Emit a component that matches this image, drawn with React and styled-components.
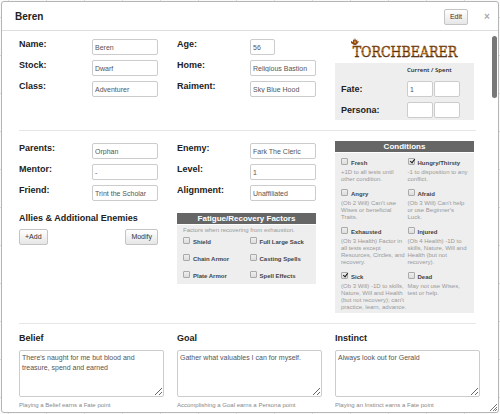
import React, { useId } from "react";
import styled, { createGlobalStyle, css } from "styled-components";

const GlobalStyle = createGlobalStyle`
  *, *::before, *::after { box-sizing: border-box; }
  body {
    margin: 0;
    font-family: "Liberation Sans", Arial, sans-serif;
    color: #222;
    background-color: #fafafa;
    background-image:
      linear-gradient(90deg, #ddd 1px, transparent 1px),
      linear-gradient(#ddd 1px, transparent 1px);
    background-size: 38px 38px;
    background-position: 8px 17px;
  }
`;

const Page = styled.div`
  padding: 1px 1px 2px;
`;

const Dialog = styled.section`
  position: relative;
  background: #fff;
  border: 1px solid #b5b5b5;
  border-radius: 3px;
`;

const Header = styled.header`
  display: flex;
  align-items: center;
  height: 29px;
  padding: 2px 6px 0 13px;
  border-bottom: 1px solid #ddd;
`;

const Title = styled.h1`
  flex: 1;
  margin: 0;
  font-size: 10px;
  line-height: 12px;
`;

const Button = styled.button`
  height: 16px;
  padding: 0 5px;
  border: 1px solid #c4c4c4;
  border-radius: 2px;
  background: linear-gradient(#fff, #e6e6e6);
  font: 7px/12px "Liberation Sans", Arial, sans-serif;
  color: #333;
`;

const CloseButton = styled.button`
  width: 10px;
  margin-left: 14px;
  padding: 0;
  border: 0;
  background: none;
  font: bold 10px/12px "Liberation Sans", Arial, sans-serif;
  color: #aaa;
`;

const Body = styled.div`
  padding: 6px 18px 3px 17px;
`;

const Columns = styled.div`
  display: grid;
  grid-template-columns: repeat(3, 1fr);
  column-gap: 13px;
`;

const Column = styled.div`
  padding-right: 6px;
`;

const Divider = styled.hr`
  height: 1px;
  margin: ${(p) => p.$margin};
  border: 0;
  background: #e6e6e6;
`;

const FieldRow = styled.div`
  display: grid;
  grid-template-columns: 73px 1fr;
  height: 21px;
  padding-top: 2px;
`;

const Label = styled.label`
  font-size: 9px;
  font-weight: bold;
  line-height: 11px;
`;

const control = css`
  border: 1px solid #ccc;
  border-radius: 2px;
  background: #fff;
  font-family: "Liberation Sans", Arial, sans-serif;
  font-size: 7px;
  color: #555;
`;

const TextInput = styled.input`
  ${control}
  width: ${(p) => (p.$short ? "25px" : "100%")};
  min-width: 0;
  height: 16px;
  padding: 0 2px;
`;

const Logo = styled.svg`
  display: block;
  width: 114px;
  height: 23px;
  margin: 0 auto 3px;
`;

const FatePanel = styled.div`
  display: grid;
  grid-template-columns: 1fr 26px 26px;
  align-items: center;
  column-gap: 1px;
  row-gap: 5px;
  padding: 2px 14px 2px 6px;
  background: #eee;
`;

const FateHead = styled.div`
  grid-column: 2 / 4;
  font-family: "Open Sans", sans-serif;
  font-size: 6px;
  font-weight: 600;
  line-height: 11px;
`;

const Panel = styled.section`
  margin-top: ${(p) => p.$top || "0"};
  background: #eee;
  color: #999;
  font-size: 6px;
  line-height: 7px;
`;

const PanelTitle = styled.h2`
  margin: 0;
  border-bottom: 1px solid #fff;
  background: #666;
  background-clip: padding-box;
  color: #fff;
  font-size: 8px;
  line-height: 11px;
  text-align: center;
`;

const PanelNote = styled.p`
  margin: 0;
  padding: 2px 6px 0;
`;

const CheckGrid = styled.div`
  display: grid;
  grid-template-columns: 1fr 1fr;
  row-gap: 6px;
  padding: ${(p) => p.$padding};
`;

const CheckLabel = styled.label`
  display: flex;
  gap: 3px;
  height: 11px;
  font-weight: bold;
  line-height: 11px;
  color: #444;
`;

const Checkbox = styled.input`
  position: relative;
  appearance: none;
  flex: none;
  width: 7px;
  height: 7px;
  margin: 0;
  border: 1px solid #aaa;
  border-radius: 1px;
  background: linear-gradient(#eee, #ddd);

  &:checked::after {
    content: "";
    position: absolute;
    top: -1px;
    left: 2px;
    width: 3px;
    height: 5px;
    border: solid #222;
    border-width: 0 1px 1px 0;
    transform: rotate(38deg);
  }
`;

const Description = styled.p`
  margin: 0;
  white-space: pre;
`;

const Heading = styled.h2`
  margin: 8px 0 5px;
  font-size: 9px;
  line-height: 12px;
`;

const ButtonRow = styled.div`
  display: flex;
  justify-content: space-between;
`;

const TextLabel = styled(Label)`
  display: block;
  margin-bottom: 6px;
`;

const TextArea = styled.textarea`
  ${control}
  display: block;
  width: 100%;
  height: 47px;
  padding: 2px;
  line-height: 10px;
  overflow: hidden;
`;

const Help = styled.p`
  margin: 4px 0 0;
  font-size: 6px;
  line-height: 8px;
  color: #888;
`;

const ScrollThumb = styled.div`
  position: absolute;
  top: 34px;
  right: 1px;
  width: 5px;
  height: 62px;
  border-radius: 3px;
  background: #777;
`;

const ResizeGrip = styled.svg`
  position: absolute;
  right: 1px;
  bottom: 1px;
  width: 7px;
  height: 7px;
`;

const LogoText = styled.text`
  font-family: "DejaVu Serif Condensed", "DejaVu Serif", serif;
  font-size: 14px;
  text-anchor: middle;
`;

function Field({ label, value, short }) {
  const id = useId();
  return (
    <FieldRow>
      <Label htmlFor={id}>{label}</Label>
      <TextInput id={id} defaultValue={value} $short={short} />
    </FieldRow>
  );
}

function Check({ label, checked, children }) {
  return (
    <div>
      <CheckLabel>
        <Checkbox type="checkbox" defaultChecked={checked} />
        {label}
      </CheckLabel>
      {children && <Description>{children}</Description>}
    </div>
  );
}

function Note({ label, value, help }) {
  const id = useId();
  return (
    <div>
      <TextLabel htmlFor={id}>{label}</TextLabel>
      <TextArea id={id} defaultValue={value} />
      <Help>{help}</Help>
    </div>
  );
}

function TorchbearerLogo() {
  return (
    <Logo viewBox="0 0 114 23" role="img" aria-label="Torchbearer">
      <defs>
        <linearGradient id="ember" gradientUnits="userSpaceOnUse" x1="0" y1="9" x2="0" y2="20">
          <stop offset="0" stopColor="#6a3c10" />
          <stop offset="0.4" stopColor="#b06a1c" />
          <stop offset="0.5" stopColor="#5a300c" />
          <stop offset="0.6" stopColor="#c07820" />
          <stop offset="1" stopColor="#4a280c" />
        </linearGradient>
      </defs>
      <LogoText x="57" y="20" fill="url(#ember)" stroke="url(#ember)" strokeWidth="0.5">
        TORCHBEARER
      </LogoText>
      <path d="M3 6 L3 4 L5 5 L5 2 L6 3.5 L7 1 L8 3.5 L9.5 2.5 L9 4.6 L11 4 L10 6 L8 8 L6 8Z" fill="#8c4816" />
      <path d="M6 5 L7 3.5 L8 5.5 L7 6.5Z" fill="#f0a33c" />
    </Logo>
  );
}

const conditions = [
  ["Fresh", false, "+1D to all tests until\nother condition."],
  ["Hungry/Thirsty", true, "-1 to disposition to any\nconflict."],
  ["Angry", false, "(Ob 2 Will) Can't use\nWises or beneficial\nTraits."],
  ["Afraid", false, "(Ob 3 Will) Can't help\nor use Beginner's\nLuck."],
  ["Exhausted", false, "(Ob 3 Health) Factor in\nall tests except\nResources, Circles, and\nrecovery."],
  ["Injured", false, "(Ob 4 Health) -1D to\nskills, Nature, Will and\nHealth (but not\nrecovery)."],
  ["Sick", true, "(Ob 3 Will) -1D to skills,\nNature, Will and Health\n(but not recovery); can't\npractice, learn, advance."],
  ["Dead", false, "May not use Wises,\ntest or help."],
];

const factors = ["Shield", "Full Large Sack", "Chain Armor", "Casting Spells", "Plate Armor", "Spell Effects"];

export default function App() {
  return (
    <>
      <GlobalStyle />
      <Page>
        <Dialog>
          <Header>
            <Title>Beren</Title>
            <Button>Edit</Button>
            <CloseButton aria-label="Close">×</CloseButton>
          </Header>
          <Body>
            <Columns>
              <Column>
                <Field label="Name:" value="Beren" />
                <Field label="Stock:" value="Dwarf" />
                <Field label="Class:" value="Adventurer" />
              </Column>
              <Column>
                <Field label="Age:" value="56" short />
                <Field label="Home:" value="Religious Bastion" />
                <Field label="Raiment:" value="Sky Blue Hood" />
              </Column>
              <Column>
                <TorchbearerLogo />
                <FatePanel>
                  <FateHead>Current / Spent</FateHead>
                  <Label htmlFor="fate">Fate:</Label>
                  <TextInput id="fate" defaultValue="1" />
                  <TextInput aria-label="Fate spent" />
                  <Label htmlFor="persona">Persona:</Label>
                  <TextInput id="persona" />
                  <TextInput aria-label="Persona spent" />
                </FatePanel>
              </Column>
            </Columns>
            <Divider $margin="10px 4px 10px 0" />
            <Columns>
              <Column>
                <Field label="Parents:" value="Orphan" />
                <Field label="Mentor:" value="-" />
                <Field label="Friend:" value="Trint the Scholar" />
                <Heading>Allies &amp; Additional Enemies</Heading>
                <ButtonRow>
                  <Button>+Add</Button>
                  <Button>Modify</Button>
                </ButtonRow>
              </Column>
              <Column>
                <Field label="Enemy:" value="Fark The Cleric" />
                <Field label="Level:" value="1" />
                <Field label="Alignment:" value="Unaffiliated" />
                <Panel $top="9px">
                  <PanelTitle>Fatigue/Recovery Factors</PanelTitle>
                  <PanelNote>Factors when recovering from exhaustion.</PanelNote>
                  <CheckGrid $padding="3px 0 2px 6px">
                    {factors.map((name) => (
                      <Check key={name} label={name} />
                    ))}
                  </CheckGrid>
                </Panel>
              </Column>
              <Column>
                <Panel>
                  <PanelTitle>Conditions</PanelTitle>
                  <CheckGrid $padding="5px 0 2px 6px">
                    {conditions.map(([name, on, text]) => (
                      <Check key={name} label={name} checked={on}>
                        {text}
                      </Check>
                    ))}
                  </CheckGrid>
                </Panel>
              </Column>
            </Columns>
            <Divider $margin="10px 4px 9px 0" />
            <Columns>
              <Note
                label="Belief"
                value="There's naught for me but blood and treasure, spend and earned"
                help="Playing a Belief earns a Fate point"
              />
              <Note
                label="Goal"
                value="Gather what valuables I can for myself."
                help="Accomplishing a Goal earns a Persona point"
              />
              <Note
                label="Instinct"
                value="Always look out for Gerald"
                help="Playing an Instinct earns a Fate point"
              />
            </Columns>
          </Body>
          <ScrollThumb />
          <ResizeGrip viewBox="0 0 7 7" aria-hidden="true">
            <path d="M0 7 L7 0 M3 7 L7 3 M5 7 L7 5" stroke="#777" fill="none" />
          </ResizeGrip>
        </Dialog>
      </Page>
    </>
  );
}
